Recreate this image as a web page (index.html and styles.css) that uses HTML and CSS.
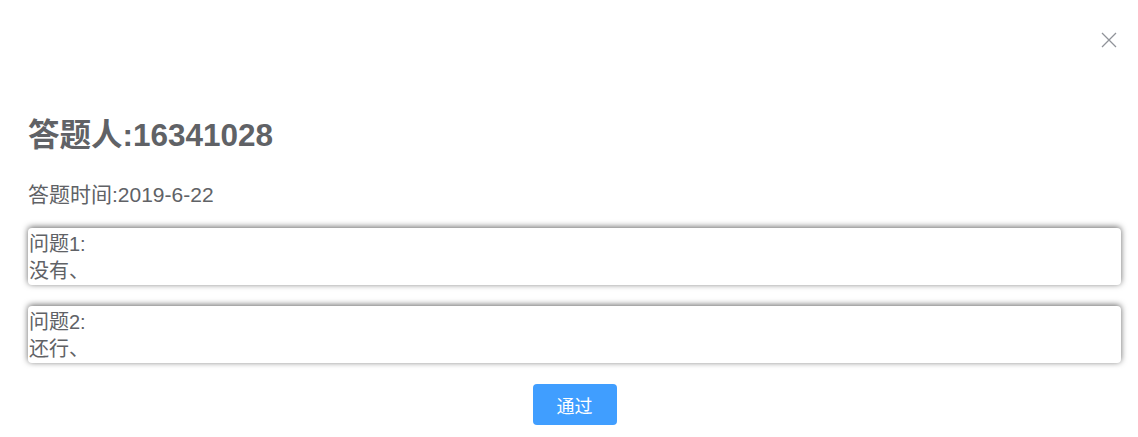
FILE: index.html
```html
<!DOCTYPE html>
<html lang="zh-CN">
<head>
    <meta charset="UTF-8">
    <meta name="viewport" content="width=device-width, initial-scale=1.0">
    <title>答题详情</title>
    <link rel="stylesheet" href="styles.css">
</head>
<body>
    <div class="dialog">
        <div class="dialog-header">
            <button class="close-btn" aria-label="关闭">
                <svg width="16" height="16" viewBox="0 0 16 16">
                    <path d="M1 1 L15 15 M15 1 L1 15" stroke="#909399" stroke-width="1.3" fill="none"/>
                </svg>
            </button>
        </div>

        <div class="dialog-body">
            <h2 class="answer-title">答题人:16341028</h2>
            <p class="answer-time">答题时间:2019-6-22</p>

            <div class="answer-box">
                <div>问题1:</div>
                <div>没有、</div>
            </div>
            <div class="answer-box">
                <div>问题2:</div>
                <div>还行、</div>
            </div>

            <div class="actions">
                <button class="pass-btn">通过</button>
            </div>
        </div>
    </div>
</body>
</html>
```

FILE: styles.css
```css
/* Answer detail dialog */
body {
    margin: 0;
    padding: 0;
    font-family: "Liberation Sans", "Noto Sans CJK SC", sans-serif;
    background-color: #fff;
    color: #606266;
}

.dialog {
    background-color: #fff;
}

/* Header with close icon */
.dialog-header {
    height: 115px;
    display: flex;
    justify-content: flex-end;
    align-items: flex-start;
    padding-right: 21px;
    box-sizing: border-box;
}

.close-btn {
    margin-top: 32px;
    padding: 0;
    border: none;
    background: none;
    width: 16px;
    height: 16px;
    cursor: pointer;
}

.close-btn svg {
    display: block;
}

/* Body */
.dialog-body {
    padding: 0 17px 0 28px;
}

.answer-title {
    margin: 0;
    font-size: 31.5px;
    line-height: 40px;
    font-weight: bold;
}

.answer-time {
    margin: 26px 0 0 0;
    font-size: 21px;
    line-height: 28px;
}

.answer-box {
    margin-top: 19px;
    padding: 3px 0 1px 1px;
    font-size: 20px;
    line-height: 26.5px;
    border-radius: 4px;
    background-color: #fff;
    box-shadow: 0 -1px 6px rgba(0, 0, 0, 0.6);
}

.answer-box + .answer-box {
    margin-top: 21px;
}

.actions {
    display: flex;
    justify-content: center;
    margin-top: 21px;
}

.pass-btn {
    width: 84px;
    height: 41px;
    border: none;
    border-radius: 4px;
    background-color: #409eff;
    color: #fff;
    font-family: "Liberation Sans", "Noto Sans CJK SC", sans-serif;
    font-size: 18px;
    cursor: pointer;
}
```
